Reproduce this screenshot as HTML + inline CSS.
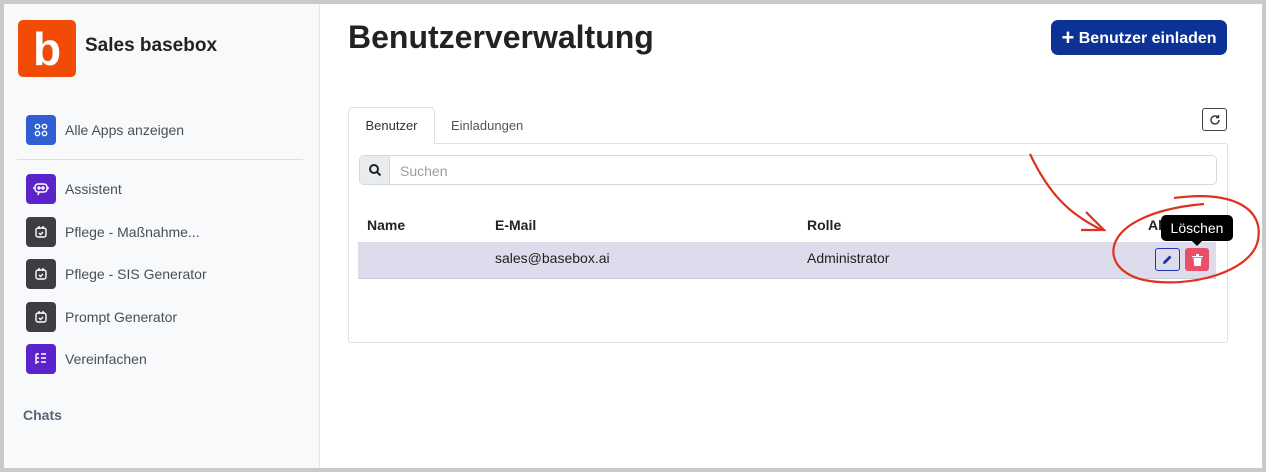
<!DOCTYPE html>
<html><head><meta charset="utf-8"><style>
*{box-sizing:border-box;margin:0;padding:0}
body{width:1266px;height:472px;background:#c9c9c9;font-family:"Liberation Sans",sans-serif;position:relative;overflow:hidden}
.frame{position:absolute;left:4px;top:4px;width:1258px;height:464px;background:#fff}
.side{position:absolute;left:0;top:0;width:316px;height:464px;background:#f8f9fb;border-right:1px solid #e3e5ea}
.abs{position:absolute}
.logo{left:14px;top:16px;width:58px;height:57px;background:#f24b05;border-radius:5px;color:#fff;font-weight:bold;font-size:46px;text-align:center;line-height:58px}
.nav{position:absolute;left:22px;display:flex;align-items:center;font-size:14px;color:#4a4f57}
.ic{width:30px;height:30px;border-radius:4px;margin-right:9px;display:flex;align-items:center;justify-content:center}
.dark{background:#3d3e42}.purp{background:#5b23c9}
</style></head><body><div class="frame">
<div class="side">
<div class="abs logo">b</div>
<div class="abs" style="left:81px;top:31px;font-size:19px;font-weight:bold;color:#222">Sales basebox</div>
<div class="nav" style="top:111px"><div class="ic" style="background:#2f5fd0"><svg width="14" height="14" viewBox="0 0 14 14" fill="none" stroke="#fff" stroke-width="1.4"><circle cx="3.5" cy="3.5" r="2.2"/><circle cx="10.5" cy="3.5" r="2.2"/><circle cx="3.5" cy="10.5" r="2.2"/><circle cx="10.5" cy="10.5" r="2.2"/></svg></div>Alle Apps anzeigen</div>
<div class="abs" style="left:13px;top:155px;width:286px;height:1px;background:#dadde3"></div>
<div class="nav" style="top:170px"><div class="ic purp"><svg width="16" height="14" viewBox="0 0 16 14" fill="none" stroke="#fff" stroke-width="1.5"><rect x="2" y="2" width="12" height="8" rx="3"/><circle cx="6" cy="6" r="1"/><circle cx="10" cy="6" r="1"/><path d="M0 6h2M14 6h2M6 10l-1 3"/></svg></div>Assistent</div>
<div class="nav" style="top:213px"><div class="ic dark"><svg width="14" height="14" viewBox="0 0 14 14" fill="none" stroke="#fff" stroke-width="1.4"><rect x="2" y="3" width="10" height="9" rx="2"/><path d="M5 1v3M9 1v3M5 8l1.5 1.5L9 7"/></svg></div>Pflege - Maßnahme...</div>
<div class="nav" style="top:255px"><div class="ic dark"><svg width="14" height="14" viewBox="0 0 14 14" fill="none" stroke="#fff" stroke-width="1.4"><rect x="2" y="3" width="10" height="9" rx="2"/><path d="M5 1v3M9 1v3M5 8l1.5 1.5L9 7"/></svg></div>Pflege - SIS Generator</div>
<div class="nav" style="top:298px"><div class="ic dark"><svg width="14" height="14" viewBox="0 0 14 14" fill="none" stroke="#fff" stroke-width="1.4"><rect x="2" y="3" width="10" height="9" rx="2"/><path d="M5 1v3M9 1v3M5 8l1.5 1.5L9 7"/></svg></div>Prompt Generator</div>
<div class="nav" style="top:340px"><div class="ic purp"><svg width="14" height="14" viewBox="0 0 14 14" fill="none" stroke="#fff" stroke-width="1.4"><path d="M2 2h3M2 2v10M2 6h3M2 10h3M7 2h5M7 6h5M7 10h5"/></svg></div>Vereinfachen</div>
<div class="abs" style="left:19px;top:403px;font-size:14px;font-weight:bold;color:#5a6478">Chats</div>
</div>
<div class="abs" style="left:344px;top:15px;font-size:32px;font-weight:bold;color:#222">Benutzerverwaltung</div>
<div class="abs" style="left:1047px;top:16px;width:176px;height:35px;background:#0b3294;border-radius:7px;color:#fff;font-size:16px;font-weight:bold;line-height:35px;text-align:center"><span style="font-size:22px;vertical-align:-2px">+</span> Benutzer einladen</div>
<div class="abs" style="left:344px;top:139px;width:880px;height:200px;border:1px solid #dee2e6;border-radius:0 3px 3px 3px"></div>
<div class="abs" style="left:344px;top:103px;width:87px;height:37px;border:1px solid #dee2e6;border-bottom:none;border-radius:5px 5px 0 0;background:#fff;font-size:13px;color:#333;line-height:36px;text-align:center">Benutzer</div>
<div class="abs" style="left:447px;top:114px;font-size:13px;color:#555">Einladungen</div>
<div class="abs" style="left:1198px;top:104px;width:25px;height:23px;border:1px solid #444;border-radius:3px;display:flex;align-items:center;justify-content:center"><svg width="12" height="12" viewBox="0 0 12 12" fill="none" stroke="#333" stroke-width="1.4"><path d="M10 6a4 4 0 1 1-1.3-3"/><path d="M9.5 1v2.5H7"/></svg></div>
<div class="abs" style="left:355px;top:151px;width:858px;height:30px;border:1px solid #d5d9de;border-radius:5px;overflow:hidden">
<div class="abs" style="left:0;top:0;width:30px;height:28px;background:#e9ecef;border-right:1px solid #d5d9de;display:flex;align-items:center;justify-content:center"><svg width="14" height="14" viewBox="0 0 14 14" fill="none" stroke="#222" stroke-width="2"><circle cx="6" cy="6" r="4"/><path d="M9 9l3.5 3.5"/></svg></div>
<div class="abs" style="left:40px;top:7px;font-size:14px;color:#9aa0a6">Suchen</div></div>
<div class="abs" style="left:363px;top:213px;font-size:14px;font-weight:bold;color:#222">Name</div>
<div class="abs" style="left:491px;top:213px;font-size:14px;font-weight:bold;color:#222">E-Mail</div>
<div class="abs" style="left:803px;top:213px;font-size:14px;font-weight:bold;color:#222">Rolle</div>
<div class="abs" style="left:1144px;top:213px;font-size:14px;font-weight:bold;color:#222">Al</div>
<div class="abs" style="left:354px;top:238px;width:858px;height:37px;background:#dcdcec;border-bottom:1px solid #ccd"></div>
<div class="abs" style="left:491px;top:246px;font-size:14px;color:#222">sales@basebox.ai</div>
<div class="abs" style="left:803px;top:246px;font-size:14px;color:#222">Administrator</div>
<div class="abs" style="left:1151px;top:244px;width:25px;height:23px;border:1px solid #2336b8;border-radius:3px;display:flex;align-items:center;justify-content:center"><svg width="11" height="11" viewBox="0 0 11 11"><path d="M1 10l.5-2.5L7.5 1.5l2 2-6 6z" fill="#1f2fa8"/></svg></div>
<div class="abs" style="left:1181px;top:244px;width:24px;height:23px;background:#e8506a;border-radius:3px;display:flex;align-items:center;justify-content:center"><svg width="11" height="12" viewBox="0 0 11 12"><path d="M0 2h11v1.3H0zM4 0h3v2H4zM1.5 4h8l-.7 8H2.2z" fill="#fff"/></svg></div>
<div class="abs" style="left:1157px;top:211px;width:72px;height:26px;background:#000;border-radius:5px;color:#fff;font-size:14px;line-height:26px;text-align:center">Löschen</div>
<div class="abs" style="left:1188px;top:237px;width:0;height:0;border-left:5px solid transparent;border-right:5px solid transparent;border-top:5px solid #000"></div>
<svg class="abs" style="left:0;top:0" width="1258" height="464" fill="none" stroke="#e0301e" stroke-width="2.2"><path d="M1026 150 C1045 190 1065 210 1098 226"/><path d="M1077 226 L1100 226 L1082 208"/><path d="M1170 194 C1230 186 1260 205 1254 236 C1248 268 1185 285 1140 276 C1105 268 1100 240 1125 222 C1145 208 1175 202 1200 200"/></svg>
</div></body></html>
